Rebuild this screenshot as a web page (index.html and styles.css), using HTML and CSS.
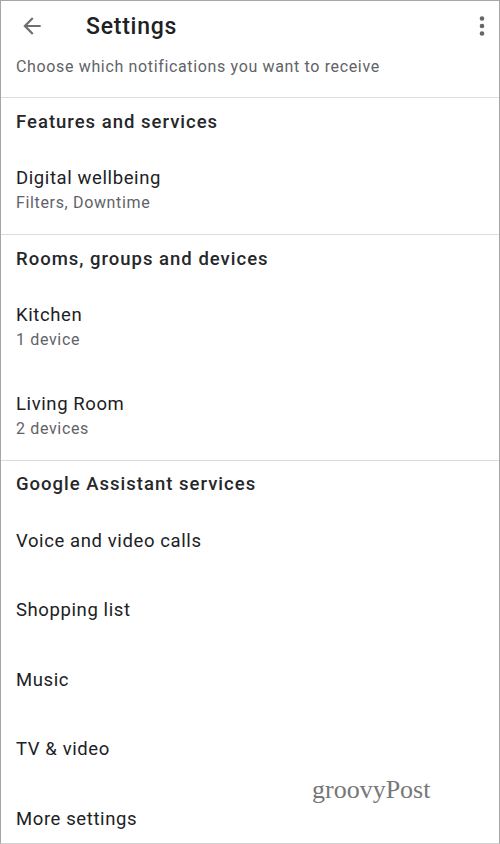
FILE: index.html
```html
<!DOCTYPE html>
<html lang="en">
<head>
  <meta charset="UTF-8">
  <meta name="viewport" content="width=device-width, initial-scale=1.0">
  <title>Settings</title>
  <link rel="stylesheet" href="styles.css">
</head>
<body>
  <div class="screen">
    <div class="topbar">
      <svg class="back" viewBox="0 0 24 24" width="26" height="26">
        <path d="M20 11H7.83l5.59-5.59L12 4l-8 8 8 8 1.41-1.41L7.83 13H20v-2z" fill="#6f6f6f"/>
      </svg>
      <h1>Settings</h1>
      <svg class="menu" viewBox="0 0 10 24" width="10" height="24">
        <circle cx="5" cy="4.5" r="2.3" fill="#666"/>
        <circle cx="5" cy="12" r="2.3" fill="#666"/>
        <circle cx="5" cy="19.5" r="2.3" fill="#666"/>
      </svg>
    </div>
    <p class="intro">Choose which notifications you want to receive</p>

    <div class="section">
      <div class="section-title">Features and services</div>
      <div class="item two">
        <div class="item-title">Digital wellbeing</div>
        <div class="item-sub">Filters, Downtime</div>
      </div>
    </div>

    <div class="section">
      <div class="section-title">Rooms, groups and devices</div>
      <div class="item two">
        <div class="item-title">Kitchen</div>
        <div class="item-sub">1 device</div>
      </div>
      <div class="item two">
        <div class="item-title">Living Room</div>
        <div class="item-sub">2 devices</div>
      </div>
    </div>

    <div class="section">
      <div class="section-title short">Google Assistant services</div>
      <div class="item one"><div class="item-title">Voice and video calls</div></div>
      <div class="item one"><div class="item-title">Shopping list</div></div>
      <div class="item one"><div class="item-title">Music</div></div>
      <div class="item one"><div class="item-title">TV &amp; video</div></div>
      <div class="item one"><div class="item-title">More settings</div></div>
    </div>

    <div class="watermark">groovyPost</div>
  </div>
</body>
</html>
```

FILE: styles.css
```css
* {
  box-sizing: border-box;
}

body {
  margin: 0;
  background-color: #fff;
  font-family: Roboto, "Liberation Sans", sans-serif;
  color: #202124;
}

.screen {
  position: relative;
  width: 500px;
  height: 844px;
  overflow: hidden;
  border: 1px solid #a6a6a6;
  border-bottom-color: #d0d0d0;
}

.topbar {
  display: flex;
  align-items: center;
  height: 50px;
  padding: 0 12px 0 18px;
}

.back {
  flex: none;
}

.topbar h1 {
  flex: 1;
  margin: 0 0 0 41px;
  font-size: 23px;
  font-weight: 500;
  letter-spacing: 0.75px;
  color: #202124;
}

.menu {
  flex: none;
}

.intro {
  margin: 0;
  padding: 6px 15px 0;
  height: 46px;
  font-size: 16px;
  letter-spacing: 0.65px;
  color: #5f6368;
}

.section {
  border-top: 1px solid #dadce0;
}

.section-title {
  display: flex;
  align-items: center;
  height: 47px;
  padding: 0 15px;
  font-size: 18.5px;
  font-weight: 500;
  letter-spacing: 1px;
  color: #26272a;
}

.section-title.short {
  height: 45px;
}

.item {
  display: flex;
  flex-direction: column;
  justify-content: center;
  padding: 0 15px;
}

.item.two {
  height: 89px;
}

.item.one {
  height: 69.5px;
}

.item-title {
  font-size: 18.5px;
  letter-spacing: 0.6px;
  color: #202124;
}

.item-sub {
  margin-top: 4px;
  font-size: 16px;
  letter-spacing: 0.65px;
  color: #5f6368;
}

.watermark {
  position: absolute;
  left: 311px;
  top: 774px;
  font-family: "Liberation Serif", "DejaVu Serif", serif;
  font-size: 26px;
  color: #777;
}
```
